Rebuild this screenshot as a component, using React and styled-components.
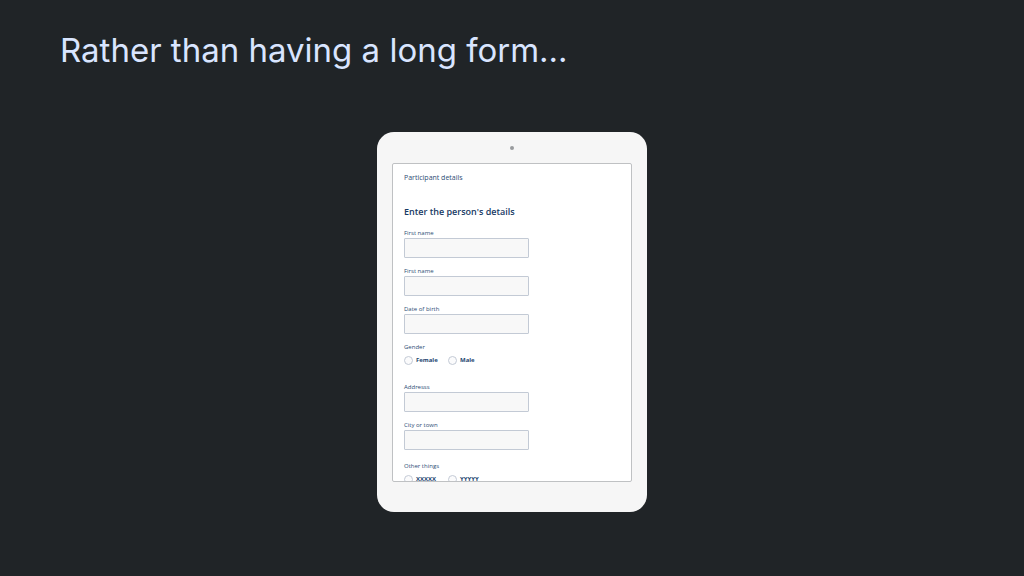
import React from "react";
import styled, { createGlobalStyle } from "styled-components";

const GlobalStyle = createGlobalStyle`
  *, *::before, *::after { box-sizing: border-box; }
  body {
    margin: 0;
    background: #202427;
    font-family: "Inter", "Liberation Sans", sans-serif;
  }
`;

const Slide = styled.main`
  min-height: 100vh;
  display: flex;
  flex-direction: column;
  background: #202427;
`;

const Title = styled.h1`
  margin: 0;
  padding: 30px 60px 62px;
  color: #d9e5ff;
  font-size: 33px;
  font-weight: 400;
  line-height: 40px;
`;

const Tablet = styled.section`
  width: 270px;
  max-width: 100%;
  margin: 0 auto 64px;
  padding: 0 15px 30px;
  border-radius: 17px;
  background: #f6f6f6;
`;

const CameraBar = styled.div`
  height: 31px;
  display: flex;
  align-items: center;
  justify-content: center;
`;

const Camera = styled.span`
  width: 4px;
  height: 4px;
  border-radius: 50%;
  background: #999b9e;
`;

const Screen = styled.div`
  aspect-ratio: 240 / 319;
  overflow: hidden;
  padding: 8px 11px 0;
  border: 1px solid #bfc1c3;
  border-radius: 2px;
  background: #ffffff;
  color: #2d4d75;
  font-family: "Open Sans", "Noto Sans", sans-serif;
`;

const Crumb = styled.p`
  margin: 0 0 22px;
  font-size: 7px;
  line-height: 12px;
`;

const Heading = styled.h2`
  margin: 0 0 10px;
  color: #173a64;
  font-size: 9px;
  font-weight: 600;
  line-height: 12px;
`;

const Form = styled.form`
  display: flex;
  flex-direction: column;
  gap: 8px;
`;

const Field = styled.div`
  display: flex;
  flex-direction: column;
  width: 125px;
`;

const Label = styled.label`
  font-size: 6px;
  line-height: 10px;
`;

const TextBox = styled.input`
  width: 100%;
  height: 20px;
  margin: 0;
  padding: 0 4px;
  border: 1px solid #c3cad5;
  border-radius: 1px;
  background: #f8f8f8;
  color: inherit;
  font: inherit;
  font-size: 7px;
`;

const Group = styled.fieldset`
  margin: 0;
  margin-top: ${({ $top }) => $top || 0}px;
  margin-bottom: ${({ $bottom }) => $bottom || 0}px;
  padding: 0;
  border: 0;
`;

const Legend = styled.legend`
  padding: 0;
  font-size: 6px;
  line-height: 10px;
`;

const Options = styled.div`
  display: grid;
  grid-template-columns: repeat(2, 44px);
  padding-top: 2px;
`;

const Option = styled.label`
  display: flex;
  align-items: center;
  gap: 3px;
  color: #234570;
  font-size: 6px;
  font-weight: 700;
  line-height: 12px;
`;

const Radio = styled.input`
  appearance: none;
  flex: none;
  width: 9px;
  height: 9px;
  margin: 0;
  border: 1px solid #c3cad5;
  border-radius: 50%;
  background: #fbfbfc;

  &:checked {
    background: #234570;
  }
`;

function TextField({ id, label }) {
  return (
    <Field>
      <Label htmlFor={id}>{label}</Label>
      <TextBox id={id} name={id} type="text" />
    </Field>
  );
}

function RadioGroup({ name, label, options, top, bottom }) {
  return (
    <Group $top={top} $bottom={bottom}>
      <Legend>{label}</Legend>
      <Options>
        {options.map((option) => (
          <Option key={option}>
            <Radio type="radio" name={name} value={option} />
            {option}
          </Option>
        ))}
      </Options>
    </Group>
  );
}

export default function App() {
  return (
    <>
      <GlobalStyle />
      <Slide>
        <Title>Rather than having a long form...</Title>
        <Tablet>
          <CameraBar>
            <Camera />
          </CameraBar>
          <Screen>
            <Crumb>Participant details</Crumb>
            <Heading>Enter the person's details</Heading>
            <Form>
              <TextField id="first-name" label="First name" />
              <TextField id="second-name" label="First name" />
              <TextField id="birth-date" label="Date of birth" />
              <RadioGroup
                name="gender"
                label="Gender"
                options={["Female", "Male"]}
                bottom={8}
              />
              <TextField id="address" label="Addresss" />
              <TextField id="city" label="City or town" />
              <RadioGroup
                name="other"
                label="Other things"
                options={["XXXXX", "YYYYY"]}
                top={3}
              />
            </Form>
          </Screen>
        </Tablet>
      </Slide>
    </>
  );
}
